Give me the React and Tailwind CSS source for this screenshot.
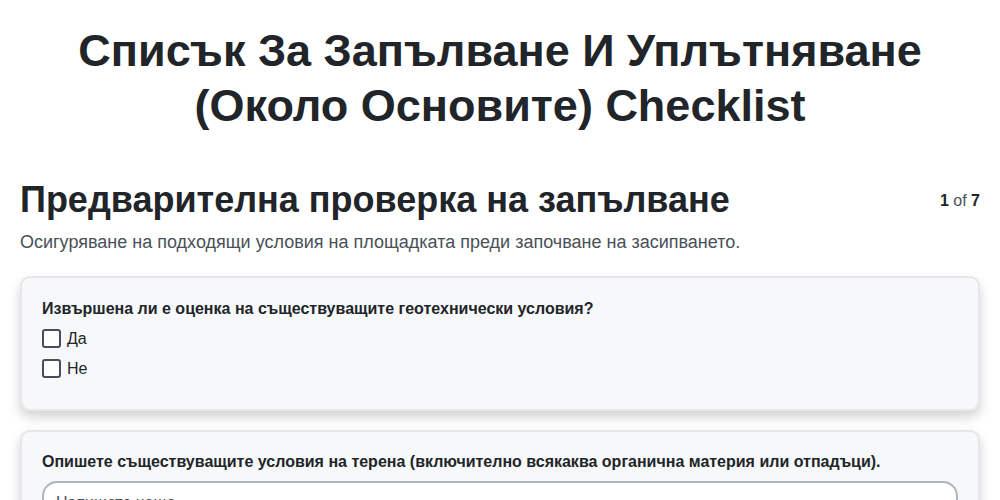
import React from 'react';

const options = ['Да', 'Не'];

const App = () => {
  return (
    <div className="min-h-screen bg-white text-[#212529]" style={{ fontFamily: '"Liberation Sans", Arial, sans-serif' }}>
      <div className="px-5 pt-[23px]">
        <h1 className="text-center text-[45px] font-bold leading-[55px] px-6">
          Списък За Запълване И Уплътняване (Около Основите) Checklist
        </h1>

        <div className="mt-[45px] flex items-start justify-between">
          <h2 className="text-[36px] font-bold leading-[44px]">Предварителна проверка на запълване</h2>
          <div className="pt-[11px] text-[16px]">
            <span className="font-bold">1</span> <span className="text-[#495057]">of</span> <span className="font-bold">7</span>
          </div>
        </div>
        <p className="mt-[7px] text-[18px] text-[#495057]">
          Осигуряване на подходящи условия на площадката преди започване на засипването.
        </p>

        <div className="mt-[20px] rounded-[10px] border-2 border-[#e5e7eb] bg-[#f7f8fa] px-[20px] pt-[19px] pb-[31px] shadow-[0_6px_12px_rgba(0,0,0,0.18)]">
          <p className="text-[16px] font-bold leading-[24px]">
            Извършена ли е оценка на съществуващите геотехнически условия?
          </p>
          <div className="mt-[8px] flex flex-col gap-[11px]">
            {options.map((o) => (
              <label key={o} className="flex items-center gap-[6px] text-[16px] leading-[19px]">
                <span className="inline-block h-[19px] w-[19px] rounded-[3px] border-2 border-[#474d5c] bg-white" />
                <span>{o}</span>
              </label>
            ))}
          </div>
        </div>

        <div className="mt-[19px] rounded-[10px] border-2 border-[#e5e7eb] bg-[#f7f8fa] px-[20px] pt-[18px] pb-[28px] shadow-[0_6px_12px_rgba(0,0,0,0.18)]">
          <p className="text-[16px] font-bold leading-[24px]">
            Опишете съществуващите условия на терена (включително всякаква органична материя или отпадъци).
          </p>
          <div className="mt-[7px] h-[80px] rounded-[15px] border-2 border-[#adb5bd] bg-white px-[12px] pt-[8px] text-[16px] text-[#495057]">
            Напишете нещо...
          </div>
        </div>
      </div>
    </div>
  );
};

export default App;
